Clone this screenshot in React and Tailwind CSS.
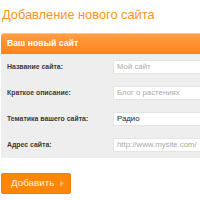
import React from "react";

const fields = [
  { label: "Название сайта:", value: "Мой сайт", placeholder: true },
  { label: "Краткое описание:", value: "Блог о растениях", placeholder: true },
  { label: "Тематика вашего сайта:", value: "Радио", placeholder: false },
  { label: "Адрес сайта:", value: "http://www.mysite.com/", placeholder: true },
];

export default function App() {
  return (
    <div className="w-[200px] h-[200px] overflow-hidden bg-white font-['Liberation_Sans',Arial,sans-serif]">
      <div className="w-[240px] pl-[1px]">
        {/* Title */}
        <h1 className="h-[33px] pl-[1px] pt-[7px] text-[12.8px] leading-[16px] text-[#f7941e]">
          Добавление нового сайта
        </h1>

        {/* Header */}
        <div className="h-[21px] flex items-center pl-[6px] rounded-t-[3px] border-t border-[#ffc48a] bg-gradient-to-b from-[#ff9f45] to-[#ff8210]">
          <span className="text-[8.7px] font-bold text-white">Ваш новый сайт</span>
        </div>

        {/* Form */}
        <div className="bg-[#eeeeee]">
          {fields.map((f, i) => (
            <div key={i} className="h-[26px] flex items-center">
              <span className="w-[112px] pl-[6px] text-[6.9px] font-bold text-[#3a3a3a]">
                {f.label}
              </span>
              <div className="h-[14px] flex-1 flex items-center pl-[3px] bg-white border border-[#e4e4e4]">
                <span
                  className={`text-[7.8px] ${
                    f.placeholder ? "text-[#a9a9a9]" : "text-[#222]"
                  }`}
                >
                  {f.value}
                </span>
              </div>
            </div>
          ))}
        </div>

        {/* Button */}
        <button className="mt-[15px] w-[70px] h-[21px] flex items-center pl-[9px] gap-[6px] rounded-[2px] bg-[#ff8606] border border-[#f57f00]">
          <span className="text-[9.8px] text-[#fff3e0]">Добавить</span>
          <svg width="4" height="7" viewBox="0 0 4 7">
            <path d="M0 0 L4 3.5 L0 7 Z" fill="#ffb060" />
          </svg>
        </button>
      </div>
    </div>
  );
}
